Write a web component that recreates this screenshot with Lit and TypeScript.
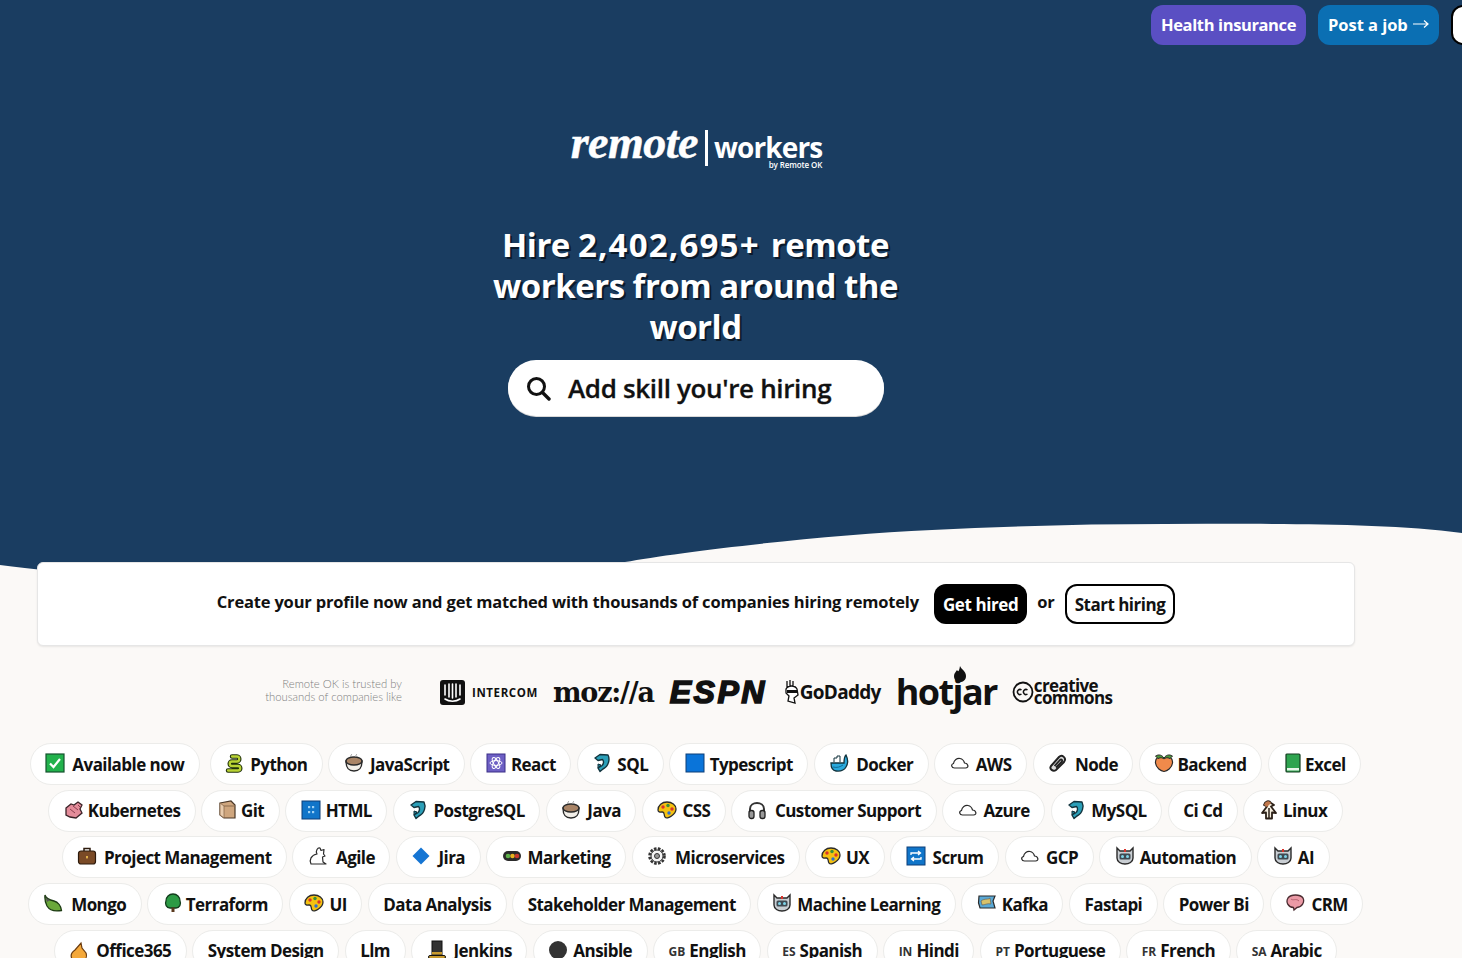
import { LitElement, html, css, svg } from "lit";
import { customElement } from "lit/decorators.js";

const o = "#2a2a2a";
const dolphin = svg`<path d="M3 5 L8 1.500 L16 2 C18 6 17 13 11 16 L8 18.500 L6 15 L9.500 13 C12 11 12 8 10.500 6.500 L6 7.500 Z" fill="#2b9fb8" stroke="#12333d" stroke-width="1.400" stroke-linejoin="round"/><path d="M6 11 L9 12 L6 15 Z" fill="#1e7d92" stroke="#12333d"/>`;
const cup = svg`<path d="M2 8 C2 16 5 18 10 18 C15 18 18 16 18 8 Z" fill="#f2efe9" stroke="${o}" stroke-width="1.400"/><ellipse cx="10" cy="8" rx="8" ry="4" fill="#a98466" stroke="${o}" stroke-width="1.400"/><path d="M7 4 C6 2.500 8 2 7.500 1 M12 4 C11 2.500 13 2 12.500 1" fill="none" stroke="#999" stroke-width="1"/>`;
const cloud = svg`<path d="M4.500 15 C1.500 15 .5 11.500 3.500 10.500 C4 7 7 5 10 5.500 C12.500 6 14 8 14.500 10 C18 10 19.500 15 15.500 15 Z" fill="#fff" stroke="${o}" stroke-width="1.200"/>`;
const palette = svg`<path d="M10 2 C5 2 1 5.500 1 10 C1 12.500 3.500 12 5.500 12 C8 12 6.500 15 8 17 C9 18.500 12 18 14.500 16 C17.500 14 19 11.500 19 9 C19 5 15 2 10 2 Z" fill="#f5c211" stroke="${o}" stroke-width="1.300"/><circle cx="6" cy="7" r="1.700" fill="#d9342b"/><circle cx="11" cy="5.500" r="1.700" fill="#3a8f3a"/><circle cx="15" cy="9" r="1.700" fill="#d9342b"/><circle cx="12" cy="13" r="1.700" fill="#2e6fd0"/>`;
const robot = svg`<path d="M2 2 L5 5 H15 L18 2 V12 C18 16 14 18 10 18 C6 18 2 16 2 12 Z" fill="#c9ced3" stroke="${o}" stroke-width="1.400"/><rect x="4.500" y="7.500" width="11" height="6" rx="1.500" fill="#3f4a52"/><circle cx="7.500" cy="10.500" r="1.500" fill="#7fd4e8"/><circle cx="12.500" cy="10.500" r="1.500" fill="#7fd4e8"/><rect x="9" y="3" width="2" height="3" fill="#d9342b"/>`;

const ICONS: Record<string, unknown> = {
  check: svg`<rect x="1" y="1" width="18" height="18" fill="#22b24c" stroke="#14532d" stroke-width="1.200"/><path d="M5 10.500 L8.500 14 L15 6" fill="none" stroke="#fff" stroke-width="2.200"/>`,
  snake: svg`<path d="M7 3.500 H12 C15 3.500 15 8.500 12 8.500 H7 C4 8.500 4 13 7 13 H13 C16 13 16 17.500 13 17.500 H3" fill="none" stroke="#20300a" stroke-width="4.500" stroke-linecap="round"/><path d="M7 3.500 H12 C15 3.500 15 8.500 12 8.500 H7 C4 8.500 4 13 7 13 H13 C16 13 16 17.500 13 17.500 H3" fill="none" stroke="#b9d334" stroke-width="2.300" stroke-linecap="round"/>`,
  cup,
  react: svg`<rect x="1" y="1" width="18" height="18" fill="#6d5fc4" stroke="#3b2f87"/><g fill="none" stroke="#fff" stroke-width="1"><ellipse cx="10" cy="10" rx="6" ry="2.400"/><ellipse cx="10" cy="10" rx="6" ry="2.400" transform="rotate(60 10 10)"/><ellipse cx="10" cy="10" rx="6" ry="2.400" transform="rotate(120 10 10)"/></g>`,
  dolphin,
  blue: svg`<rect x="1" y="1" width="18" height="18" fill="#0a74d9" stroke="#0c3f78"/>`,
  whale: svg`<path d="M2 10 H15 C15 8 15 4 17 2 C19 6 19.500 10 17 14 C15 17.500 11 18.500 7 18 C3 17.500 2 14 2 10 Z" fill="#2aa9dc" stroke="#12333d" stroke-width="1.300"/><path d="M5 9 V5 H8 V3 H11 V9" fill="#fff" stroke="#12333d"/><path d="M4 14 C8 15 11 14 14 12" stroke="#0e6a94" fill="none"/>`,
  cloud,
  paperclip: svg`<path d="M3 13 L11 4 C14 1 19 5 16 9 L8 17 C5 19 1 16 3 13 Z" fill="#ddd" stroke="#222" stroke-width="2"/><path d="M6.500 13 L12 7 C13.500 5.500 15 7.500 13.500 9 L8 14.500" fill="none" stroke="#222" stroke-width="1.800"/>`,
  peach: svg`<path d="M10 5 C15 2 19 5 18.500 10 C18 15 13 18 10 18.500 C7 18 2 15 1.500 10 C1 5 5 2 10 5 Z" fill="#f08a4b" stroke="${o}" stroke-width="1.200"/><path d="M1.500 3 C5 1 8 2 10 5 C12 2 15 1 18.500 3 L16 5.500 C13 4 11 5 10 6 C9 5 7 4 4 5.500 Z" fill="#4b9a3b" stroke="${o}"/>`,
  book: svg`<rect x="3" y="1" width="14" height="18" rx="1" fill="#2ea44f" stroke="#143d20" stroke-width="1.200"/><rect x="4" y="15" width="12" height="2.500" fill="#e8f5e9"/>`,
  k8s: svg`<path d="M2 8 L7 4 L10 5 L14 2 L18 5 L16 9 L18 13 L12 18 L6 17 L2 15 Z" fill="#e48c9a" stroke="#3a2328" stroke-width="1.300"/><path d="M6 9 L11 13 M9 6 L14 10 M14 5 L16 7" stroke="#8d3f4f" fill="none"/>`,
  box: svg`<path d="M3 3 L14 1 L18 5 V18 H7 L3 15 Z" fill="#cfa67e" stroke="#4a3726" stroke-width="1.200"/><path d="M3 3 L7 6 V18 L3 15 Z" fill="#e9ccae" stroke="#8a6a4c" stroke-width=".8"/><path d="M7 6 H18" stroke="#8a6a4c" fill="none"/>`,
  html: svg`<rect x="1" y="1" width="18" height="18" fill="#1075c9" stroke="#0c3f78"/><g fill="#9fd2f5"><rect x="7" y="6" width="2.200" height="2.200"/><rect x="11" y="6" width="2.200" height="2.200"/><rect x="7" y="11" width="2.200" height="2.200"/><rect x="11" y="11" width="2.200" height="2.200"/></g>`,
  palette,
  headphone: svg`<path d="M3 12 V9 C3 1 17 1 17 9 V12" fill="none" stroke="#333" stroke-width="2"/><rect x="2" y="10.500" width="5" height="8" rx="2.200" fill="#999" stroke="#222" stroke-width="1.300"/><rect x="13" y="10.500" width="5" height="8" rx="2.200" fill="#999" stroke="#222" stroke-width="1.300"/>`,
  penguin: svg`<path d="M5 5 C6 1 10 0 12 3 L15 5 L12 6.500 L17 13 L13 12.500 V18.500 H7 V12.500 L3 13 L8 6.500 Z" fill="#f6efe0" stroke="#2b2018" stroke-width="1.800" stroke-linejoin="round"/><path d="M5 5 C6 1 10 0 12 3 L8 7 Z" fill="#c0764a"/><path d="M10 8 V18" stroke="#2b2018" stroke-width="1.500"/>`,
  briefcase: svg`<rect x="1.500" y="5" width="17" height="13" rx="2.500" fill="#7a4a26" stroke="#2c1a0c" stroke-width="1.200"/><path d="M7 5 V2.500 H13 V5" fill="none" stroke="#2c1a0c" stroke-width="1.500"/><rect x="9" y="10" width="2" height="2.400" fill="#e0b04a"/>`,
  rabbit: svg`<path d="M9 8 C7 5 10 1 12 2 L13 4.500 L16 3.500 L15.500 8 L17 10 L14.500 11 L15 16 L18 18 H3 C1 14 3 9 9 8 Z" fill="#fff" stroke="${o}" stroke-width="1.200" stroke-linejoin="round"/>`,
  diamond: svg`<path d="M10 1.500 L18.500 10 L10 18.500 L1.500 10 Z" fill="#1575d3"/>`,
  light: svg`<rect x="1" y="5" width="18" height="10" rx="5" fill="#2a2a2a"/><circle cx="6" cy="10" r="2.300" fill="#5fb04a"/><circle cx="10.500" cy="10" r="2.300" fill="#e8b21f"/><circle cx="15" cy="10" r="2.300" fill="#c8382e"/>`,
  gear: svg`<circle cx="10" cy="10" r="7.500" fill="#eee" stroke="#333" stroke-width="2.600" stroke-dasharray="2.600 1.400"/><circle cx="10" cy="10" r="6" fill="#f4f4f4" stroke="#333"/><circle cx="10" cy="10" r="2.500" fill="#999" stroke="#333"/>`,
  repeat: svg`<rect x="1" y="1" width="18" height="18" fill="#1075c9" stroke="#0c3f78"/><path d="M5 9 V7 H14 M12 5 L14.500 7 L12 9 M15 11 V13 H6 M8 11 L5.500 13 L8 15" fill="none" stroke="#fff" stroke-width="1.300"/>`,
  robot,
  leaf: svg`<path d="M2 2 C3 6 7 7 11 8 C15 9 18 13 18.500 17.500 C13 18.500 7 18 4 13 C2.500 10 1.500 6 2 2 Z" fill="#6aa83a" stroke="#1d3b13" stroke-width="1.300"/><path d="M2 2 C3 5 4 6 7 7 L4 9 Z" fill="#555"/>`,
  tree: svg`<path d="M10 1 C14 1 17 4 17 8 C18.500 11 16.500 15 13 15 H7 C3.500 15 1.500 11 3 8 C3 4 6 1 10 1 Z" fill="#2d9b45" stroke="#123d1c" stroke-width="1.300"/><rect x="8.500" y="14.500" width="3" height="4.500" fill="#5a3a1f"/>`,
  map: svg`<path d="M2 3 H18 L16 8 L18 15 H3 L1.500 10 Z" fill="#5aa9d6" stroke="#2a2a2a" stroke-width="1.200"/><path d="M4 8 C8 5 11 7 13 5 L14 11 C10 10 8 12 5 12 Z" fill="#d9c26a" stroke="#555" stroke-width=".6"/>`,
  brain: svg`<path d="M3 5 C6 1 15 1 18 5 C20 9 17 14 12 14.500 L9 17 L8.500 14.500 C3 14 .5 9 3 5 Z" fill="#eb9aa6" stroke="#4a2b30" stroke-width="1.300"/><path d="M6 6 C8 8 11 5 14 8" fill="none" stroke="#b5606e"/>`,
  flame: svg`<path d="M3 19 C1 15 3 12 6 10 L12 3 L13 8 L17 13 C18 16 17 19 15 20 Z" fill="#f4a83a" stroke="#6a3a0e" stroke-width="1.200"/>`,
  hat: svg`<rect x="5" y="1" width="10" height="15" fill="#333" stroke="#111"/><rect x="5" y="12" width="10" height="2.500" fill="#c99b2e"/><rect x="1.500" y="15.500" width="17" height="3" rx="1.500" fill="#c99b2e" stroke="#111"/>`,
  circle: svg`<circle cx="10" cy="10" r="9" fill="#333"/>`,
};

/** Advance of each emoji relative to the default icon slot. */
const ICON_ADJ: Record<string, number> = {
  check: 1, snake: -1, react: -1, dolphin: -1, blue: -1, whale: 1, paperclip: 1, peach: -3, book: -4,
  k8s: -2, box: -2, html: -1, headphone: 2, penguin: -2, briefcase: 1, rabbit: 2, diamond: 1, gear: 2,
  repeat: 1, leaf: 2, tree: -3, map: -1, brain: 0, flame: 1, hat: 1, circle: -1, robot: -1, palette: -1,
};

type Tag = [string, string?, string?];
const ROWS: Tag[][] = [
  [["Available now","check"],["Python","snake"],["JavaScript","cup"],["React","react"],["SQL","dolphin"],["Typescript","blue"],["Docker","whale"],["AWS","cloud"],["Node","paperclip"],["Backend","peach"],["Excel","book"]],
  [["Kubernetes","k8s"],["Git","box"],["HTML","html"],["PostgreSQL","dolphin"],["Java","cup"],["CSS","palette"],["Customer Support","headphone"],["Azure","cloud"],["MySQL","dolphin"],["Ci Cd"],["Linux","penguin"]],
  [["Project Management","briefcase"],["Agile","rabbit"],["Jira","diamond"],["Marketing","light"],["Microservices","gear"],["UX","palette"],["Scrum","repeat"],["GCP","cloud"],["Automation","robot"],["AI","robot"]],
  [["Mongo","leaf"],["Terraform","tree"],["UI","palette"],["Data Analysis"],["Stakeholder Management"],["Machine Learning","robot"],["Kafka","map"],["Fastapi"],["Power Bi"],["CRM","brain"]],
  [["Office365","flame"],["System Design"],["Llm"],["Jenkins","hat"],["Ansible","circle"],["English",undefined,"GB"],["Spanish",undefined,"ES"],["Hindi",undefined,"IN"],["Portuguese",undefined,"PT"],["French",undefined,"FR"],["Arabic",undefined,"SA"]],
];

@customElement("app-root")
export class AppRoot extends LitElement {
  static styles = css`
    :host { display: block; height: 958px; overflow: hidden; background: #fbf9f7; font-family: "Open Sans", "Noto Sans", sans-serif; color: #111; }
    .hero { position: relative; height: 600px; background: #1a3d61; color: #fff; overflow: hidden; }
    .wave { position: absolute; left: 0; top: 0; width: 1462px; height: 600px; display: block; }
    .nav { display: flex; gap: 12px; padding: 5px 0 0 1151px; position: relative; }
    .nav-btn { flex: none; height: 40px; box-sizing: border-box; display: flex; align-items: center; padding: 0 10px 2px; border-radius: 12px; font-size: 16.500px; font-weight: 700; letter-spacing: -0.380px; white-space: nowrap; }
    .health { background: #5a4fc3; }
    .post { background: #0b6fb3; letter-spacing: -0.050px; gap: 5px; }
    .cut { width: 60px; background: #fff; border: 2px solid #000; }
    .logo { position: relative; display: flex; justify-content: center; align-items: flex-end; margin-top: 72px; height: 52px; padding-right: 69px; }
    .remote { font-family: "Liberation Serif", serif; font-style: italic; font-weight: 700; font-size: 46px; line-height: 52px; letter-spacing: -0.500px; -webkit-text-stroke: .5px #fff; }
    .bar { width: 3px; height: 36px; background: #fff; margin: 0 6px 0 7px; align-self: center; position: relative; top: 5px; }
    .workers-wrap { display: flex; flex-direction: column; align-items: flex-end; }
    .workers { font-size: 28px; line-height: 27px; font-weight: 700; letter-spacing: -0.900px; }
    .by { font-size: 8px; line-height: 8px; font-weight: 600; letter-spacing: -0.100px; }
    h1 { position: relative; margin: 55px 0 0; padding-right: 71px; text-align: center; font-size: 33px; line-height: 41px; font-weight: 700; letter-spacing: -0.500px; text-shadow: 2px 2px 0 #0b1a2a; }
    .num { letter-spacing: 1.200px; margin-right: 3px; }
    .search { position: relative; box-sizing: border-box; margin: 13px 0 0 508px; width: 376px; height: 56px; background: #fff; border-radius: 28px; box-shadow: 0 1px 0 #d8d8d8; display: flex; align-items: center; padding-left: 17px; gap: 17px; color: #111; font-size: 26px; font-weight: 600; letter-spacing: -0.340px; -webkit-text-stroke: .3px #111; }
    .search svg { flex: none; }
    .card { position: relative; box-sizing: border-box; margin: -38px 0 0 37px; width: 1318px; height: 84px; background: #fff; border: 1px solid #e6e6e6; border-radius: 6px; box-shadow: 0 1px 2px rgba(0,0,0,.08); display: flex; align-items: center; justify-content: center; font-size: 16.500px; font-weight: 700; letter-spacing: -0.180px; }
    .card-text { margin-right: 15px; position: relative; top: -3px; }
    .or { margin: 0 10px; position: relative; top: -3px; }
    .btn { box-sizing: border-box; height: 40px; display: flex; align-items: center; padding: 0 9px; border-radius: 12px; font-weight: 700; font-size: 17px; letter-spacing: -0.400px; }
    .black { background: #000; color: #fff; }
    .outline { background: #fff; border: 2px solid #000; padding: 0 8px; letter-spacing: -0.500px; }
    .trust { display: flex; align-items: center; margin: 21px 0 0 0; height: 50px; padding-left: 241px; }
    .trust-text { width: 161px; text-align: right; font-family: Lato, sans-serif; font-weight: 300; font-size: 11.300px; line-height: 13px; color: #808080; margin: 0 38px 4px 0; white-space: nowrap; }
    .logos { display: flex; align-items: center; }
    .intercom { margin-right: 15px; display: flex; align-items: center; gap: 7px; font-size: 11.500px; font-weight: 700; letter-spacing: .600px; }
    .moz { font-family: "DejaVu Serif", serif; font-weight: 700; font-size: 27px; letter-spacing: -1.200px; margin-right: 16px; white-space: nowrap; }
    .espn { font-family: "Liberation Sans", sans-serif; font-weight: 700; font-style: italic; font-size: 32px; line-height: 32px; letter-spacing: 2.500px; -webkit-text-stroke: 1.600px #111; margin-right: 13px; width: 100px; }
    .godaddy { display: flex; align-items: center; font-size: 19px; font-weight: 700; letter-spacing: -0.700px; margin-right: 15px; }
    .hotjar { position: relative; font-size: 36px; font-weight: 700; letter-spacing: -1.600px; margin-right: 15px; line-height: 48px; }
    .jflame { position: absolute; left: 57px; top: -2px; }
    .cc { display: flex; align-items: center; gap: 0; }
    .cc-text { font-size: 17px; line-height: 11.500px; font-weight: 700; letter-spacing: -0.600px; padding-bottom: 1px; }
    .cc-mark { flex: none; }
    .tags { margin-top: 26px; padding-right: 71px; display: flex; flex-direction: column; gap: 5px; }
    .row { display: flex; justify-content: center; gap: 5.500px; height: 41.700px; }
    .row:first-child .pill:first-child { margin-right: 4.500px; }
    .pill { flex: none; box-sizing: border-box; display: flex; align-items: center; gap: 6px; padding: 0 14.500px; height: 42px; background: #fff; border: 1.500px solid #ececea; border-radius: 21px; font-size: 17px; font-weight: 700; letter-spacing: -0.550px; white-space: nowrap; }
    .pill svg { flex: none; position: relative; top: -1px; }
    .flag { font-size: 12px; font-weight: 700; letter-spacing: 0; color: #333; position: relative; top: 1px; margin-right: -2px; }
  `;

  private pill([name, icon, flag]: Tag) {
    const adj = icon ? ICON_ADJ[icon] ?? 0 : 0;
    return html`<div class="pill">
      ${icon ? svg`<svg width="20" height="20" viewBox="0 0 20 20" style="margin-right:${adj}px">${ICONS[icon]}</svg>` : ""}
      ${flag ? html`<span class="flag">${flag}</span>` : ""}
      <span>${name}</span>
    </div>`;
  }

  render() {
    return html`
      <section class="hero">
        <svg class="wave" viewBox="0 0 1462 600"><path d="M0 565 C100 578 300 590 420 584 C500 582 570 572 625 562 C680 552 820 535 932 530 C1010 526 1090 524 1165 524 C1270 524 1380 522 1462 533 V600 H0 Z" fill="#fbf9f7"/></svg>
        <nav class="nav">
          <div class="nav-btn health">Health insurance</div>
          <div class="nav-btn post">Post a job<svg width="16" height="10" viewBox="0 0 16 10"><path d="M0 5 H15 M11 1.500 L15 5 L11 8.500" fill="none" stroke="#fff" stroke-width="1.200"/></svg></div>
          <div class="nav-btn cut"></div>
        </nav>
        <div class="logo">
          <span class="remote">remote</span><span class="bar"></span>
          <div class="workers-wrap"><span class="workers">workers</span><span class="by">by Remote OK</span></div>
        </div>
        <h1>Hire <span class="num">2,402,695+</span> remote<br />workers from around the<br />world</h1>
        <div class="search">
          <svg width="26" height="26" viewBox="0 0 26 26"><circle cx="11.500" cy="11.500" r="8" fill="none" stroke="#111" stroke-width="3"/><path d="M17.500 17.500 L24 24" stroke="#111" stroke-width="3.400" stroke-linecap="round"/></svg>
          <span>Add skill you're hiring</span>
        </div>
      </section>
      <section class="card">
        <span class="card-text">Create your profile now and get matched with thousands of companies hiring remotely</span>
        <div class="btn black">Get hired</div>
        <span class="or">or</span>
        <div class="btn outline">Start hiring</div>
      </section>
      <section class="trust">
        <div class="trust-text">Remote OK is trusted by<br />thousands of companies like</div>
        <div class="logos">
          <div class="intercom">
            <svg width="25" height="25" viewBox="0 0 25 25"><rect width="25" height="25" rx="3" fill="#111"/><path d="M5 5 V15 M9 4 V17 M12.500 4 V18 M16 4 V17 M20 5 V15 M5 19 C9 22 16 22 20 19" fill="none" stroke="#fff" stroke-width="1.600" stroke-linecap="round"/></svg>
            <span>INTERCOM</span>
          </div>
          <span class="moz">moz://a</span>
          <span class="espn">ESPN</span>
          <div class="godaddy">
            <svg width="17" height="26" viewBox="0 0 17 26"><path d="M4 9 V2 M7 8 V1 M10 8 V2 M3 10 C5 6 12 6 14 10 L15 16 L11 19 L12 24 L5 22 L6 17 L3 14 Z" fill="#fff" stroke="#111" stroke-width="1.300"/><rect x="4" y="11" width="10" height="3" fill="#111"/></svg>
            <span>GoDaddy</span>
          </div>
          <span class="hotjar">hotjar<svg class="jflame" width="14" height="16" viewBox="0 0 14 16"><path d="M7 0 C8 3 13 5 13 10 C13 14 10 16 7 16 C4 16 1 14 1 10 C1 7 3 6 4 4 C5 6 6 6 7 0 Z" fill="#111"/></svg></span>
          <div class="cc">
            <svg class="cc-mark" width="22" height="22" viewBox="0 0 22 22"><circle cx="11" cy="11" r="9.500" fill="none" stroke="#111" stroke-width="1.800"/><path d="M9.500 9 A2.500 2.500 0 1 0 9.500 13 M15.500 9 A2.500 2.500 0 1 0 15.500 13" fill="none" stroke="#111" stroke-width="1.500"/></svg>
            <div class="cc-text">creative<br />commons</div>
          </div>
        </div>
      </section>
      <section class="tags">
        ${ROWS.map((r) => html`<div class="row">${r.map((t) => this.pill(t))}</div>`)}
      </section>
    `;
  }
}
